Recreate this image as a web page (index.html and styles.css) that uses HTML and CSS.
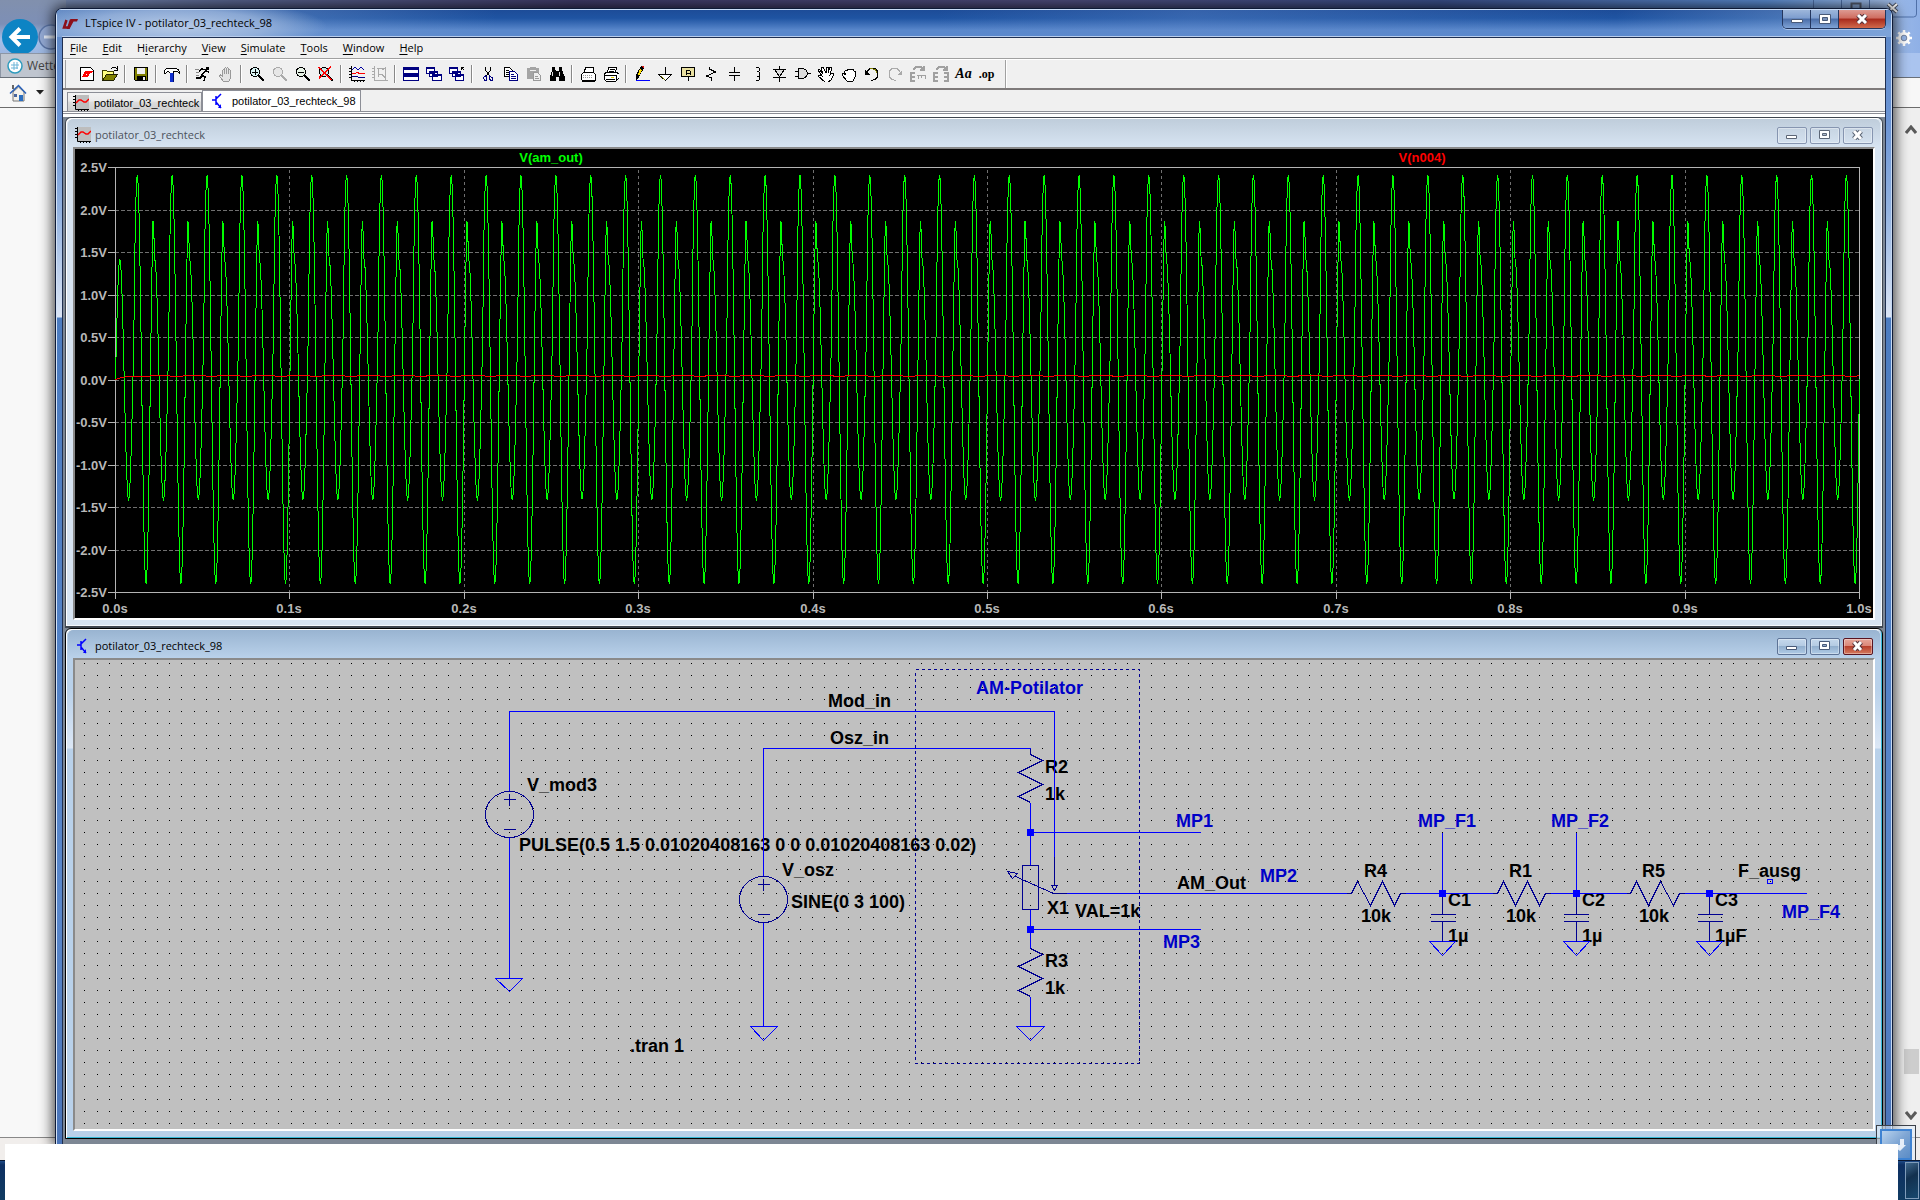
FILE: index.html
```html
<!DOCTYPE html>
<html lang="en">
<head>
<meta charset="utf-8">
<title>LTspice IV - potilator_03_rechteck_98</title>
<link rel="stylesheet" href="styles.css">
</head>
<body>
<div class="desktop">

  <div class="browser">
    <div class="browser-top">
      <div class="browser-nav">
        <button class="nav-back" aria-label="Back"><svg width="36" height="36" viewBox="0 0 36 36"><circle cx="18" cy="18" r="18" fill="#0d84c4"/><path d="M28 18H10M18 9.500l-8.500 8.500 8.500 8.500" fill="none" stroke="#fff" stroke-width="4"/></svg></button>
        <button class="nav-forward" aria-label="Forward"><svg width="26" height="26" viewBox="0 0 26 26"><circle cx="13" cy="13" r="12" fill="#93a9d3" stroke="#5c76a8" stroke-width="1.500"/><path d="M6 13h14" stroke="#e5ecf8" stroke-width="3"/></svg></button>
      </div>
      <div class="browser-corner">
        <div class="browser-caption">
          <svg width="104" height="18" viewBox="0 0 104 18"><path d="M0.500 0v14q0 3 3 3h97q3 0 3-3V0M28.500 0v17M56.500 0v17" fill="none" stroke="#4f70a8"/><path d="M38.500 3.500h9v7h-9z" fill="none" stroke="#555d70" stroke-width="2"/><path d="M75 4l9 8M84 4l-9 8" stroke="#4a5264" stroke-width="4"/><path d="M75 4l9 8M84 4l-9 8" stroke="#fff" stroke-width="2"/></svg>
        </div>
        <button class="gear" aria-label="Settings"><svg width="16" height="16" viewBox="0 0 16 16"><circle cx="8" cy="8" r="4.500" fill="none" stroke="#fff" stroke-width="3"/><path d="M8 0v3M8 13v3M0 8h3M13 8h3M2.300 2.300l2 2M11.700 11.700l2 2M2.300 13.700l2-2M11.700 4.300l2-2" stroke="#fff" stroke-width="2.500"/><circle cx="8" cy="8" r="2.800" fill="none" stroke="#7888a5"/></svg></button>
      </div>
    </div>
    <div class="browser-tabs"><div class="browser-tab"><svg width="18" height="18" viewBox="0 0 18 18"><circle cx="9" cy="9" r="7" fill="#fff" stroke="#2e9bbd" stroke-width="1.500"/><path d="M5 8h8M5 11h7M8 5v8M11 5v7" stroke="#6db5d8"/></svg><span>Wette</span></div></div>
    <div class="browser-commands">
      <svg width="18" height="18" viewBox="0 0 18 18"><path d="M4 8v9h11V8L9.500 3z" fill="#f4f2ec" stroke="#777"/><path d="M1 9.500L9.500 1.500 17 9.500" fill="none" stroke="#2860b8" stroke-width="1.500"/><path d="M10 11h4v6h-4z" fill="#2a6ec0"/><path d="M5 10h3v3H5z" fill="#49659c"/><path d="M3 1h2v4H3z" fill="#666"/></svg>
      <svg width="8" height="5" viewBox="0 0 8 5"><path d="M0 0h8L4 4.500z" fill="#222"/></svg>
    </div>
    <div class="browser-page">
      <div class="browser-scroll">
        <svg width="12" height="10" viewBox="0 0 12 10"><path d="M1 8l5-6 5 6" fill="none" stroke="#5a5a5a" stroke-width="3"/></svg>
        <div class="scroll-thumb"></div>
        <svg width="12" height="10" viewBox="0 0 12 10"><path d="M1 2l5 6 5-6" fill="none" stroke="#5a5a5a" stroke-width="3"/></svg>
      </div>
    </div>
    <div class="browser-status"></div>
    <div class="taskbar"><button class="show-desktop" aria-label="Show desktop"></button></div>
  </div>

  <main class="app">
    <header class="titlebar">
      <svg width="16" height="12" viewBox="0 0 16 12"><path d="M4.500 2L2 9.500h4.500L9 2" fill="none" stroke="#8c0f1a" stroke-width="2.500"/><path d="M8 1h8l-1 2.500h-3.500L7.500 11H4.500L9 3z" fill="#8c0f1a"/></svg>
      <h1>LTspice IV - potilator_03_rechteck_98</h1>
      <div class="caption">
        <button aria-label="Minimize"><svg width="12" height="10" viewBox="0 0 12 10"><path d="M.500 5.500h11v3H.500z" fill="#fff" stroke="#495a78"/></svg></button>
        <button aria-label="Maximize"><svg width="12" height="10" viewBox="0 0 12 10"><path d="M.500.500h11v9H.500z" fill="#fff" stroke="#495a78"/><path d="M3.500 3.500h5v3h-5z" fill="#7890b8" stroke="#495a78"/></svg></button>
        <button class="close" aria-label="Close"><svg width="12" height="10" viewBox="0 0 12 10"><path d="M2 1l8 8M10 1L2 9" stroke="#54343c" stroke-width="5"/><path d="M2 1l8 8M10 1L2 9" stroke="#fff" stroke-width="3"/></svg></button>
      </div>
    </header>

    <div class="client">
      <nav class="menu">
        <button><u>F</u>ile</button><button><u>E</u>dit</button><button>H<u>i</u>erarchy</button><button><u>V</u>iew</button><button><u>S</u>imulate</button><button><u>T</u>ools</button><button><u>W</u>indow</button><button><u>H</u>elp</button>
      </nav>

      <div class="toolbar">
        <div class="tools">
          <button aria-label="New schematic"><svg viewBox="0 0 16 16"><path d="M1.500 1.500h10l3 3v10h-13z" fill="#fff" stroke="#000"/><path d="M6 5h3L7 9h2l-1 2H3zM9 5h5l-1 2h-2l-2 4H7z" fill="#f00"/></svg></button>
          <button aria-label="Open"><svg viewBox="0 0 16 16"><path d="M.500 13.500v-9h4l1 1h6v3" fill="#ffff80" stroke="#404000"/><path d="M.500 14.500l4-6h11l-4 6z" fill="#808000" stroke="#202000"/><path d="M9 3l2-2h2l2 2M15 0v4h-3" fill="none" stroke="#000"/></svg></button>
          <i></i>
          <button aria-label="Save"><svg viewBox="0 0 16 16"><path d="M1.500 1.500h13v13h-12l-1-1z" fill="#808000" stroke="#000"/><path d="M4 2h8v6H4z" fill="#efefef"/><path d="M4 10h9v4H4z" fill="#000"/><path d="M10 11h2v3h-2z" fill="#efefef"/></svg></button>
          <i></i>
          <button aria-label="Control panel"><svg viewBox="0 0 16 16"><path d="M0 5l3-3h8q4 1 4.500 5l-3-2h-2L9 7H6L4 5 2 7H0z" fill="#fff" stroke="#000"/><path d="M6 7h4v9H6z" fill="#1030d0"/><path d="M9 7h1v9H9z" fill="#001070"/></svg></button>
          <i></i>
          <button aria-label="Run"><svg viewBox="0 0 16 16"><path d="M11 1h3v3h-3z" fill="#000"/><path d="M11 4L7 9l3 2-1 4M8 9l-3 3H1M11 4L7 3 4 5M11 5l3 1" fill="none" stroke="#000" stroke-width="1.500"/><path d="M0 3h4M1 6h3M1 9h3" stroke="#888"/></svg></button>
          <button aria-label="Halt" disabled><svg viewBox="0 0 16 16"><path d="M4.500 10V4.500q1-1.500 2 0V8 2.500q1-1.500 2 0V8 2.500q1-1.500 2 0V8 4.500q1-1.500 2 0v7q-1 3-2 4h-5L1.500 10q0-1.500 1-1z" fill="#e4e4e4" stroke="#999"/></svg></button>
          <i></i>
          <button aria-label="Zoom in"><svg viewBox="0 0 16 16"><circle cx="6" cy="6" r="4.700" fill="#d8f4f4" stroke="#000"/><path d="M3 6h6M6 3v6" stroke="#000"/><path d="M10 10l5 5" stroke="#000" stroke-width="2"/></svg></button>
          <button aria-label="Pan" disabled><svg viewBox="0 0 16 16"><circle cx="6" cy="6" r="4.700" fill="#e6e6e6" stroke="#aaa"/><path d="M10 10l5 5" stroke="#aaa" stroke-width="2"/></svg></button>
          <button aria-label="Zoom back"><svg viewBox="0 0 16 16"><circle cx="6" cy="6" r="4.700" fill="#e8f4e8" stroke="#000"/><path d="M3 6h6" stroke="#000"/><path d="M10 10l5 5" stroke="#000" stroke-width="2"/></svg></button>
          <button aria-label="Zoom to fit"><svg viewBox="0 0 16 16"><circle cx="6" cy="6" r="4.700" fill="#c8e8e8" stroke="#000"/><path d="M10 10l5 5" stroke="#000" stroke-width="2"/><path d="M1 1l12 13M13 1L1 12" stroke="#f00" stroke-width="1.500"/></svg></button>
          <i></i>
          <button aria-label="Autorange"><svg viewBox="0 0 16 16"><path d="M2.500 0v14.500H16M0 2.500h2M0 5.500h2M0 8.500h2M0 11.500h2M5.500 14v2M8.500 14v2M11.500 14v2M14.500 14v2" fill="none" stroke="#000"/><path d="M3 4l3-3 3 3 3-3 3 3" fill="none" stroke="#0000a0"/><path d="M3 7.500h3l2-1 3 1h5" fill="none" stroke="#f00"/><path d="M3 10.500h5l2 1h6" fill="none" stroke="#000080"/></svg></button>
          <button aria-label="Setup plot" disabled><svg viewBox="0 0 16 16"><path d="M2.500 0v14.500H16M0 2.500h2M0 5.500h2M0 8.500h2M0 11.500h2M5 2.500h6M6.500 2v9M6 8.500h4l3 3M10 4l3-2v12" fill="none" stroke="#aaa"/></svg></button>
          <i></i>
          <button aria-label="Tile"><svg viewBox="0 0 16 16"><path d="M.500 1.500h15v6H.500zM.500 8.500h15v6H.500z" fill="#fff" stroke="#000080"/><path d="M0 1h16v3H0zM0 8h16v3H0z" fill="#000080"/></svg></button>
          <button aria-label="Cascade"><svg viewBox="0 0 16 16"><g fill="#fff" stroke="#000080"><path d="M.500 1.500h8v6h-8zM3.500 5.500h8v5h-8zM6.500 8.500h9v6h-9z"/></g><path d="M0 1h9v2H0zM3 5h9v2H3zM6 8h10v2H6z" fill="#000080"/></svg></button>
          <button aria-label="Close all"><svg viewBox="0 0 16 16"><g fill="#fff" stroke="#000080"><path d="M.500 1.500h8v6h-8zM3.500 5.500h8v5h-8zM6.500 8.500h8v6h-8z"/></g><path d="M0 1h9v2H0zM3 5h9v2H3zM6 8h9v2H6z" fill="#000080"/><path d="M12 1.500h3M12.500 1v3M12 1l3 3" stroke="#000"/></svg></button>
          <i></i>
          <button aria-label="Cut"><svg viewBox="0 0 16 16"><path d="M5.500 1v3l4 6M10.500 1v3l-4 6" fill="none" stroke="#000"/><path d="M3.500 11.500l2-1.500 1 1v3h-2zM9.500 10l3 2v2h-2l-1-1z" fill="none" stroke="#000080"/></svg></button>
          <button aria-label="Copy"><svg viewBox="0 0 16 16"><path d="M1.500 1.500h5l3 3v6h-8z" fill="#fff" stroke="#000"/><path d="M3 4.500h3M3 6.500h4M3 8.500h3" stroke="#000"/><path d="M6.500 5.500h5l3 3v6h-8z" fill="#fff" stroke="#000080"/><path d="M8 8.500h3M8 10.500h5M8 12.500h5" stroke="#000080"/></svg></button>
          <button aria-label="Paste" disabled><svg viewBox="0 0 16 16"><path d="M1 2h3V1h6v1h3v11H1z" fill="#a4a4a4"/><path d="M4 4.500h6" stroke="#eee"/><path d="M7.500 6.500h4l3 3v5h-7z" fill="#eee" stroke="#999"/><path d="M9 10.500h3M9 12.500h4" stroke="#999"/></svg></button>
          <button aria-label="Find"><svg viewBox="0 0 16 16"><path d="M3 1h3v3l1 1h2l1-1V1h3v3l3 7v4h-6v-4H7v4H1v-4l2-6z" fill="#000"/><path d="M3.500 6v4M10.500 6v4" stroke="#ddd"/></svg></button>
          <i></i>
          <button aria-label="Print setup"><svg viewBox="0 0 16 16"><path d="M4 6l2-5h7v5M1.500 8.500l2-2h10l2 2v6h-13l-1-1z" fill="#fff" stroke="#000"/><path d="M3 9.500h9M3 11.500h9" stroke="#999" stroke-dasharray="1 1"/><path d="M2 14h13v2H2z" fill="#000"/></svg></button>
          <button aria-label="Print"><svg viewBox="0 0 16 16"><path d="M4 7l2-6h8l-2 6M1 8l3-2h9l3 2v4l-3 3H3l-2-2z" fill="#fff" stroke="#000"/><path d="M7 3.500h5M6 5.500h5M1 9.500h12M3 13.500h9M13.500 9v5" stroke="#000"/><path d="M8 11h3v1H8z" fill="#e6d000"/></svg></button>
          <i></i>
          <button aria-label="Draw wire"><svg viewBox="0 0 16 16"><path d="M7 0l3 2-5 9-3 3 0-5z" fill="#000"/><path d="M6 3l2 1-3 6-1-1z" fill="#ffe000"/><path d="M7 0h3v3z" fill="#e01010"/><path d="M2 14.500h14" stroke="#00f"/></svg></button>
          <button aria-label="Ground"><svg viewBox="0 0 16 16"><path d="M8.500 1v7" stroke="#000"/><path d="M1.500 8.500h13L8.500 14.500z" fill="#fff" stroke="#000"/><path d="M4 10l4 4" stroke="#808000"/></svg></button>
          <button aria-label="Label net"><svg viewBox="0 0 16 16"><rect x="1.500" y="1.500" width="13" height="9" rx="1" fill="#e9e0a0" stroke="#000"/><path d="M6 9V5l1-1h2l1 1v4M6 7.500h4M8 11v4" fill="none" stroke="#000"/></svg></button>
          <button aria-label="Resistor"><svg viewBox="0 0 16 16"><path d="M6.500 1v2l6 3-9 4 5 2v3" fill="none" stroke="#000"/></svg></button>
          <button aria-label="Capacitor"><svg viewBox="0 0 16 16"><path d="M8.500 1v6M8.500 10v5M3 6.500h11M3 9.500h11" stroke="#000"/></svg></button>
          <button aria-label="Inductor"><svg viewBox="0 0 16 16"><path d="M7 1.500q4 0 4 2t-3 2q3 0 3 2.500t-3 2q3 0 3 2.500t-4 2" fill="none" stroke="#000"/></svg></button>
          <button aria-label="Diode"><svg viewBox="0 0 16 16"><path d="M7.500 0v16M1 3.500h13M1 11.500h13" stroke="#000"/><path d="M2.500 3.500h10l-5 7z" fill="#ddd" stroke="#000"/></svg></button>
          <button aria-label="Component"><svg viewBox="0 0 16 16"><path d="M3.500 2.500h5q4 2 4 5t-4 5h-5z" fill="#ddd" stroke="#000"/><path d="M0 5.500h3M0 10.500h3M13 7.500h3" stroke="#000"/></svg></button>
          <button aria-label="Move"><svg viewBox="0 0 16 16"><path d="M1 3l4 5-2-6 2-1 3 6V1h2v6l2-6 2 1-2 7 2-2 2 1-3 6-3 2H7L0 10l1-1 3 1-4-6z" fill="#fff" stroke="#000"/></svg></button>
          <button aria-label="Drag"><svg viewBox="0 0 16 16"><path d="M3 6l2-2 1 1 1-2h2l1 1 2-1 1 2 2 1-1 5-2 4H6L1 9l1-2 3 2z" fill="#fff" stroke="#000"/></svg></button>
          <button aria-label="Undo"><svg viewBox="0 0 16 16"><path d="M3 6q2-4 6-4 5 1 5 6 0 5-5 6H7" fill="none" stroke="#000"/><path d="M1 4v5h5z" fill="#000"/><path d="M6 3q6-1 7 4" fill="none" stroke="#808000"/></svg></button>
          <button aria-label="Redo" disabled><svg viewBox="0 0 16 16"><path d="M13 6q-2-4-6-4-5 1-5 6 0 5 5 6h2" fill="none" stroke="#aaa"/><path d="M15 4v5h-5z" fill="#aaa"/></svg></button>
          <button aria-label="Rotate" disabled><svg viewBox="0 0 16 16"><path d="M3 4l3-3h5l3 3M14 0v4h-4M5 7H1v8h4M1 11h4M7 9.500h9M8.500 9v4M11.500 9v3M15.500 9v4" fill="none" stroke="#a0a0a0" stroke-width="1.500"/></svg></button>
          <button aria-label="Mirror" disabled><svg viewBox="0 0 16 16"><path d="M3 4l3-3h5l3 3M14 0v4h-4M5 7H1v8h4M1 11h4M11 7h4v8h-4M11 11h4" fill="none" stroke="#a0a0a0" stroke-width="1.500"/></svg></button>
          <button class="tool-text tool-aa">Aa</button>
          <button class="tool-text">.op</button>
        </div>
      </div>

      <div class="doc-tabs">
        <button class="doc-tab"><svg width="16" height="16" viewBox="0 0 16 16"><path d="M2 0h14v14H2z" fill="#bdbdbd"/><path d="M2.500 0v14.500H16M0 1.500h2M0 4.500h2M0 7.500h2M0 10.500h2M5.500 14v2M8.500 14v2M11.500 14v2M14.500 14v2" fill="none" stroke="#000"/><path d="M3 8l3-3h2l3 2h2l3-3" fill="none" stroke="#f00" stroke-width="1.500"/></svg>potilator_03_rechteck</button>
        <button class="doc-tab active"><svg width="16" height="16" viewBox="0 0 16 16"><path d="M1 7h4M5 3v9M5 6l5-5M5 9l5 6" fill="none" stroke="#00f" stroke-width="1.500"/><path d="M10 11v4H7z" fill="#00f"/></svg>potilator_03_rechteck_98</button>
      </div>

      <div class="mdi">
        <section class="child">
          <header class="child-title">
            <svg width="16" height="16" viewBox="0 0 16 16"><path d="M2 0h14v14H2z" fill="#bdbdbd"/><path d="M2.500 0v14.500H16M0 1.500h2M0 4.500h2M0 7.500h2M0 10.500h2M5.500 14v2M8.500 14v2M11.500 14v2M14.500 14v2" fill="none" stroke="#000"/><path d="M3 8l3-3h2l3 2h2l3-3" fill="none" stroke="#f00" stroke-width="1.500"/></svg>
            <h2>potilator_03_rechteck</h2>
            <div class="child-caption">
              <button aria-label="Minimize"><svg width="12" height="10" viewBox="0 0 12 10"><path d="M.500 5.500h10v3H.500z" fill="#fff" stroke="#5c6676"/></svg></button>
              <button aria-label="Maximize"><svg width="12" height="10" viewBox="0 0 12 10"><path d="M.500.500h10v8H.500z" fill="#fff" stroke="#5c6676"/><path d="M3.500 3.500h4v2h-4z" fill="#a9b8cc" stroke="#5c6676"/></svg></button>
              <button aria-label="Close"><svg width="12" height="10" viewBox="0 0 12 10"><path d="M2 1l7 8M9 1L2 9" stroke="#5c6676" stroke-width="5"/><path d="M2 1l7 8M9 1L2 9" stroke="#fff" stroke-width="3"/></svg></button>
            </div>
          </header>
          <div class="view plot-view"><svg id="plot" viewBox="75 149 1798 469"></svg></div>
        </section>

        <section class="child focused">
          <header class="child-title">
            <svg width="16" height="16" viewBox="0 0 16 16"><path d="M2 7h4M6 3v9M6 6l5-5M6 9l5 6" fill="none" stroke="#00f" stroke-width="1.500"/><path d="M11 11v4H8z" fill="#00f"/></svg>
            <h2>potilator_03_rechteck_98</h2>
            <div class="child-caption">
              <button aria-label="Minimize"><svg width="12" height="10" viewBox="0 0 12 10"><path d="M.500 5.500h10v3H.500z" fill="#fff" stroke="#495a78"/></svg></button>
              <button aria-label="Maximize"><svg width="12" height="10" viewBox="0 0 12 10"><path d="M.500.500h10v8H.500z" fill="#fff" stroke="#495a78"/><path d="M3.500 3.500h4v2h-4z" fill="#8fa9cc" stroke="#495a78"/></svg></button>
              <button class="close" aria-label="Close"><svg width="12" height="10" viewBox="0 0 12 10"><path d="M2 1l7 8M9 1L2 9" stroke="#54343c" stroke-width="5"/><path d="M2 1l7 8M9 1L2 9" stroke="#fff" stroke-width="3"/></svg></button>
            </div>
          </header>
          <div class="view schematic-view">
            <svg id="schematic" viewBox="75 660 1798 469">
              <path id="grid" fill="#000"/>
              <g class="label">
                <text x="828" y="707">Mod_in</text>
                <text x="830" y="744">Osz_in</text>
                <text x="527" y="791">V_mod3</text>
                <text x="519" y="851">PULSE(0.5 1.5 0.01020408163 0 0 0.01020408163 0.02)</text>
                <text x="782" y="876">V_osz</text>
                <text x="791" y="908">SINE(0 3 100)</text>
                <text x="630" y="1052">.tran 1</text>
                <text x="1045" y="773">R2</text><text x="1045" y="800">1k</text>
                <text x="1045" y="967">R3</text><text x="1045" y="994">1k</text>
                <text x="1047" y="914">X1</text><text x="1075" y="917">VAL=1k</text>
                <text x="1177" y="889">AM_Out</text>
                <text x="1364" y="877">R4</text><text x="1361" y="922">10k</text>
                <text x="1509" y="877">R1</text><text x="1506" y="922">10k</text>
                <text x="1642" y="877">R5</text><text x="1639" y="922">10k</text>
                <text x="1448" y="906">C1</text><text x="1448" y="942">1µ</text>
                <text x="1582" y="906">C2</text><text x="1582" y="942">1µ</text>
                <text x="1715" y="906">C3</text><text x="1715" y="942">1µF</text>
                <text x="1738" y="877">F_ausg</text>
              </g>
              <g class="label note">
                <text x="976" y="694">AM-Potilator</text>
                <text x="1176" y="827">MP1</text>
                <text x="1260" y="882">MP2</text>
                <text x="1163" y="948">MP3</text>
                <text x="1418" y="827">MP_F1</text>
                <text x="1551" y="827">MP_F2</text>
                <text x="1782" y="918">MP_F4</text>
              </g>
              <g class="ink" transform="translate(.5 .5)">
                <path class="box" d="M915 669H1139V1063H915z"/>
                <path class="wire" d="M509 790V711H1054V856M763 875V748H1030M509 837V978M763 922V1026M1030 802V865M1030 909V948M1030 832H1200M1030 929H1200M1066 893H1346M1030 996V1026M1405 893H1492M1442 832V893M1550 893H1626M1576 832V893M1684 893H1806"/>
                <path class="wire" d="M495 978H522L509 991zM750 1026H777L763 1040zM1016 1026H1044L1030 1040zM1429 941H1455L1442 955zM1563 941H1589L1576 955zM1696 941H1722L1709 955zM1767 879h5v4h-5z"/>
                <path class="part" d="M1030 748V754L1042 760 1018 772 1042 784 1018 796 1030 802M1030 948L1042 954 1018 966 1042 978 1018 990 1030 996M1022 865h16v44h-16zM1054 856V885M1051 885h6l-3 5zM1066 893H1053L1015 876M1007 871l10 2-5 5z"/>
                <path class="part" d="M1346 893H1351L1357 881 1370 905 1382 881 1394 905 1400 893H1405M1492 893H1497L1503 881 1515 905 1527 881 1539 905 1545 893H1550M1626 893H1630L1636 881 1648 905 1660 881 1673 905 1679 893H1684"/>
                <path class="part" d="M1442 893V914M1430 914h25M1430 921h25M1442 921V941M1576 893V914M1563 914h25M1563 921h25M1576 921V941M1709 893V914M1697 914h25M1697 921h25M1709 921V941"/>
                <path class="part" d="M503 799h12M509 793v12M503 829h12M757 884h12M763 878v12M757 914h12"/>
                <ellipse class="part" cx="509" cy="814" rx="24" ry="23"/>
                <ellipse class="part" cx="763" cy="899" rx="24" ry="23"/>
              </g>
              <path fill="#00f" d="M1027 829h7v7h-7zM1027 926h7v7h-7zM1439 890h7v7h-7zM1573 890h7v7h-7zM1706 890h7v7h-7z"/>
            </svg>
          </div>
        </section>
      </div>
    </div>
  </main>

  <div class="resize-hint"><div class="resize-tile"><svg width="14" height="14" viewBox="0 0 14 14"><path d="M0 7h8V1h4v6h2l-6 6z" fill="#e6eef8"/></svg></div></div>
  <div class="blank"></div>
</div>
<script src="script.js"></script>
</body>
</html>
```

FILE: styles.css
```css
* { box-sizing: border-box; }
body { margin: 0; background: #fff; font: 11px/16px "Open Sans", "Noto Sans", sans-serif; color: #000; }
button { margin: 0; padding: 0; border: 0; background: none; font: inherit; color: inherit; }
svg { display: block; flex: none; }
h1, h2 { margin: 0; font-size: 11px; line-height: 16px; font-weight: 400; }

.desktop { position: relative; min-height: 100vh; display: flex; overflow: hidden; }

/* browser behind the application */
.browser { flex: 1; display: flex; flex-direction: column; background: #f8f8f8; }
.browser-top { height: 53px; display: flex; justify-content: space-between; background: linear-gradient(90deg, #7d94bb 0, #58648f 12%, #3f3b69 30%, #4d4c7c 55%, #3a4f8a 75%, #5a8bd0 92%, #a0bde9 98%, #8fb0e6 100%); }
.browser-nav { display: flex; align-items: center; padding: 20px 0 0 2px; width: 66px; background: linear-gradient(#8190ad, #7d8fb6 45%, #a5bfe8 75%, #9cb6e0); }
.browser-corner { width: 110px; display: flex; flex-direction: column; align-items: flex-end; padding-right: 3px; }
.gear { margin: 12px 5px 0 0; }
.browser-tabs { height: 25px; display: flex; background: linear-gradient(90deg, #a9bcdc, #aac4ef); border-bottom: 1px solid #6a7079; }
.browser-tab { width: 120px; display: flex; align-items: center; gap: 3px; padding-left: 5px; background: #bfc5cf; border: solid #8d96a5; border-width: 1px 0 0 1px; color: #444; font-size: 12px; }
.browser-commands { height: 30px; display: flex; align-items: center; gap: 9px; padding-left: 9px; background: #f7f7f7; border-bottom: 1px solid #6c6c6c; }
.browser-page { flex: 1; display: flex; justify-content: flex-end; }
.browser-scroll { width: 30px; background: #efefef; display: flex; flex-direction: column; align-items: flex-end; padding: 17px 3px 17px 0; }
.scroll-thumb { width: 15px; height: 25px; margin: auto -2px 36px 0; background: #cdcdcd; }
.browser-status { height: 23px; background: #f1eeec; border-top: 1px solid #888; }
.taskbar { height: 40px; display: flex; justify-content: flex-end; padding: 1px 1px 1px 0; background: linear-gradient(#1e4a86, #0d2f62 10%, #113c62); border-top: 1px solid #0a1730; }
.show-desktop { width: 14px; border: 1px solid #7f9cba; background: linear-gradient(150deg, #40688c, #12304f 40%, #17486e); }

/* application window */
.app { position: absolute; left: 55px; right: 27px; top: 8px; bottom: 56px; padding: 0 6px; border: 1px solid #0e1a36; border-bottom: 0; border-radius: 7px 7px 0 0; box-shadow: inset 1px 1px #d3e2f6, inset -1px 0 #c5d8f2, 0 0 14px 2px rgba(0,0,0,.75); overflow: hidden; background: linear-gradient(#5b86c6 0, #6b94d4 110px, #92b2e0 200px, #dbe5f5 308px, #4c7cc0 309px, #5a88cc 900px, #4a74b8); }
.titlebar { height: 28px; margin: 0 -5px; padding-left: 5px; display: flex; align-items: center; gap: 5px; background: radial-gradient(ellipse 150px 26px at 120px 16px, rgba(190,208,234,.9), rgba(160,185,222,.75) 60%, transparent), linear-gradient(90deg, rgba(130,165,215,.7), transparent 24%, transparent 48%, rgba(100,140,205,.35) 62%, transparent 85%, rgba(160,190,230,.5)), linear-gradient(#1d4c98, #1f54a2 30%, #5a88cc 75%, #5a88cc); border-top: 1px solid #c8dbf5; }
.titlebar h1 { margin-left: 2px; padding-bottom: 1px; }
.caption { margin-left: auto; align-self: flex-start; display: flex; height: 19px; margin-right: 5px; border: solid #23365e; border-width: 0 1px 1px; border-radius: 0 0 5px 5px; overflow: hidden; box-shadow: 0 1px #a9c3ea; }
.caption button { width: 28px; display: grid; place-items: center; border-right: 1px solid #23365e; background: linear-gradient(#9db6da, #7d9dce 45%, #4a6da8 50%, #7fa3d6); }
.caption .close { width: 46px; border: 0; background: linear-gradient(#dd9a92, #cf6c5f 45%, #a82a1c 50%, #d06a4c); }

.client { border: 1px solid #1f2f50; background: #f0f0f0; height: 100%; box-shadow: 0 -1px #b9cdec; }
.menu { height: 22px; display: flex; border-bottom: 1px solid #fff; box-shadow: inset 0 -1px #a0a0a0; }
.menu button { padding: 0 8px 1px 7px; }
.menu u { text-underline-offset: 2px; }
.toolbar { height: 30px; display: flex; padding: 0 0 0 2px; border-bottom: 2px solid #7e7a7a; }
.tools { display: flex; align-items: center; padding: 0 7px 0 9px; border: solid #a0a0a0; border-width: 0 1px; box-shadow: 1px 0 #fff; }
.tools button { width: 23px; display: grid; place-items: center; }
.tools svg { width: 16px; height: 16px; shape-rendering: crispEdges; }
.tools i { width: 2px; height: 18px; margin: 0 3px; background: linear-gradient(90deg, #888 50%, #fff 50%); }
.tools .tool-text { font: bold 12px/16px "Liberation Serif", serif; }
.tools .tool-aa { font-size: 14px; font-style: italic; }

.doc-tabs { height: 22px; display: flex; align-items: flex-end; padding-left: 4px; border-bottom: 1px solid #8c8e96; }
.doc-tab { height: 19px; width: 135px; display: flex; align-items: center; gap: 5px; padding: 1px 0 0 5px; border: 1px solid #8c8e96; border-bottom: 0; background: linear-gradient(#f2f2f2, #ebebeb 45%, #dcdcdc 50%, #cfcfcf); font-family: "Liberation Sans", sans-serif; white-space: nowrap; }
.doc-tab.active { height: 21px; width: 159px; padding: 0 0 0 8px; background: #fff; }

/* document windows */
.mdi { padding: 5px 2px; background: linear-gradient(#fff 0 1px, #8c8e96 1px 2px, #fff 2px 5px, #7d8794 5px); border-bottom: 1px solid #999; }
.child { padding: 0 7px 6px; border: 1px solid #3f4650; border-bottom-width: 2px; border-radius: 6px 6px 0 0; box-shadow: inset 1px 1px #fff, inset -1px -1px #f4f8fc; background: #d7e4f2; }
.child-title { height: 29px; margin: 0 -5px; padding: 4px 5px 0 7px; display: flex; align-items: center; gap: 4px; border-top: 1px solid #fff; border-radius: 5px 5px 0 0; background: linear-gradient(#bfcddb, #d7e4f2); color: #4c525c; }
.child-caption { margin-left: auto; display: flex; gap: 3px; padding-right: 2px; }
.child-caption button { width: 30px; height: 17px; display: grid; place-items: center; border: 1px solid #8695b0; border-radius: 2px; box-shadow: inset 0 0 0 1px rgba(255,255,255,.35); }
.view { border: 2px solid; border-color: #8a8a8a #fff #fff #8a8a8a; }
.view svg { width: 100%; height: auto; }
.plot-view { background: #000; }
.schematic-view { background: #c0c0c0; }
.focused { border-color: #000; border-bottom: 1px solid #000; padding-bottom: 7px; box-shadow: inset 1px 1px #fff, inset -1px -1px #35b8d6; background: linear-gradient(#b9d1ea 0, #b9d1ea 60px, #dce7f5 119px, #b9d1ea 120px); }
.focused .child-title { background: linear-gradient(#99b4d1, #b9d1ea); color: #000; }
.focused .child-caption button { border-color: #5d7396; background: linear-gradient(#c5d8ec, #b4cbe3 45%, #92afce 50%, #b0cbe6); }
.focused .child-caption .close { border-color: #5a1420; background: linear-gradient(#e6a79b, #dc8878 45%, #b8402c 50%, #d47a5e); }

#plot text { font: bold 13px "Liberation Sans", sans-serif; fill: #b8b8b8; }
#plot .trace-out { fill: #0f0; }
#plot .trace-n004 { fill: #f00; }
#plot path { fill: none; shape-rendering: crispEdges; }
.frame { stroke: #b4b4b4; }
.gridline { stroke: #707070; stroke-dasharray: 4 2; }
.gridline-v { stroke: #707070; stroke-dasharray: 3 3; }
.wave-out { stroke: #0f0; }
.wave-n004 { stroke: #f00; }

.label text { font: bold 18px "Liberation Sans", sans-serif; }
.note text { fill: #0000c8; }
#grid, .ink { shape-rendering: crispEdges; }
.ink path, .ink ellipse { fill: none; }
.ink .wire { stroke: #00f; }
.ink .part { stroke: #000090; }
.ink .box { stroke: #000090; stroke-dasharray: 3 3; }

.resize-hint { position: absolute; right: 4px; bottom: 40px; width: 40px; height: 35px; padding: 3px 3px 0; border: 1px solid #3b4048; border-bottom: 0; background: rgba(225,236,248,.6); }
.resize-tile { height: 31px; display: grid; place-items: center; padding-left: 6px; border: 2px solid #3f83d2; background: linear-gradient(135deg, #b9d3ee, #7fa6d4 50%, #5b8cc6); }
.blank { position: absolute; left: 5px; right: 22px; bottom: 0; height: 56px; background: #fff; }
```

FILE: script.js
```js
const NS = "http://www.w3.org/2000/svg";
const plot = document.getElementById("plot");

const X0 = 115, X1 = 1859, TOP = 167, BOTTOM = 592;
const px = t => X0 + t * (X1 - X0) + 0.5;
const py = v => 379.5 - v * 85;

function add(tag, attrs, text) {
  const el = document.createElementNS(NS, tag);
  for (const k in attrs) el.setAttribute(k, attrs[k]);
  if (text) el.textContent = text;
  plot.appendChild(el);
}

// grid and axes
let horizontal = "", vertical = "", frame = `M${X0 + 0.5} ${TOP + 0.5}H${X1 + 0.5}V599M${X0 + 0.5} ${TOP}V599M${X0} ${BOTTOM + 0.5}H${X1}`;
for (let i = -5; i <= 5; i++) {
  const y = Math.round(py(i / 2)) + 0.5;
  if (Math.abs(i) < 5) horizontal += `M${X0} ${y}H${X1}`;
  frame += `M108 ${y}H${X0}`;
  add("text", { x: 107, y: y + 4.5, "text-anchor": "end" }, (i / 2).toFixed(1) + "V");
}
for (let i = 0; i <= 10; i++) {
  const x = Math.floor(px(i / 10)) + 0.5;
  if (i > 0 && i < 10) vertical += `M${x} 170V${BOTTOM}`;
  frame += `M${x} ${BOTTOM}V599`;
  add("text", { x: x - 0.5, y: 613, "text-anchor": "middle" }, (i / 10).toFixed(1) + "s");
}
add("path", { class: "gridline", d: horizontal });
add("path", { class: "gridline-v", d: vertical });
add("path", { class: "frame", d: frame });

// 100 Hz carrier scaled by the pulse source (1 ms edges, 20 ms period)
function level(t) {
  if (t < 0.0102) return 1.41;
  const p = (t - 0.0102) % 0.02;
  if (p < 0.001) return 1.41 + 990 * p;
  if (p < 0.0112) return 2.4;
  if (p < 0.0122) return 2.4 - 990 * (p - 0.0112);
  return 1.41;
}
let out = "", n004 = "";
for (let i = 0; i <= 4000; i++) {
  const t = i / 4000;
  out += `${i ? "L" : "M"}${px(t).toFixed(2)} ${py(level(t) * Math.sin(200 * Math.PI * t)).toFixed(2)}`;
}
for (let i = 0; i <= 500; i++) {
  const t = i / 500;
  const v = 0.045 * (1 - Math.exp(-t / 0.008)) + 0.008 * Math.sin(100 * Math.PI * t);
  n004 += `${i ? "L" : "M"}${px(t).toFixed(2)} ${py(v).toFixed(2)}`;
}
add("path", { class: "wave-out", d: out });
add("path", { class: "wave-n004", d: n004 });
add("text", { class: "trace-out", x: 551, y: 162, "text-anchor": "middle" }, "V(am_out)");
add("text", { class: "trace-n004", x: 1422, y: 162, "text-anchor": "middle" }, "V(n004)");

// schematic grid points
let dots = "";
for (let r = 0; r < 39; r++)
  for (let c = 0; c < 148; c++)
    dots += `M${Math.floor(84.9 + 12.125 * c)} ${Math.floor(663.3 + 12.105 * r)}h1v1h-1z`;
document.getElementById("grid").setAttribute("d", dots);
```
